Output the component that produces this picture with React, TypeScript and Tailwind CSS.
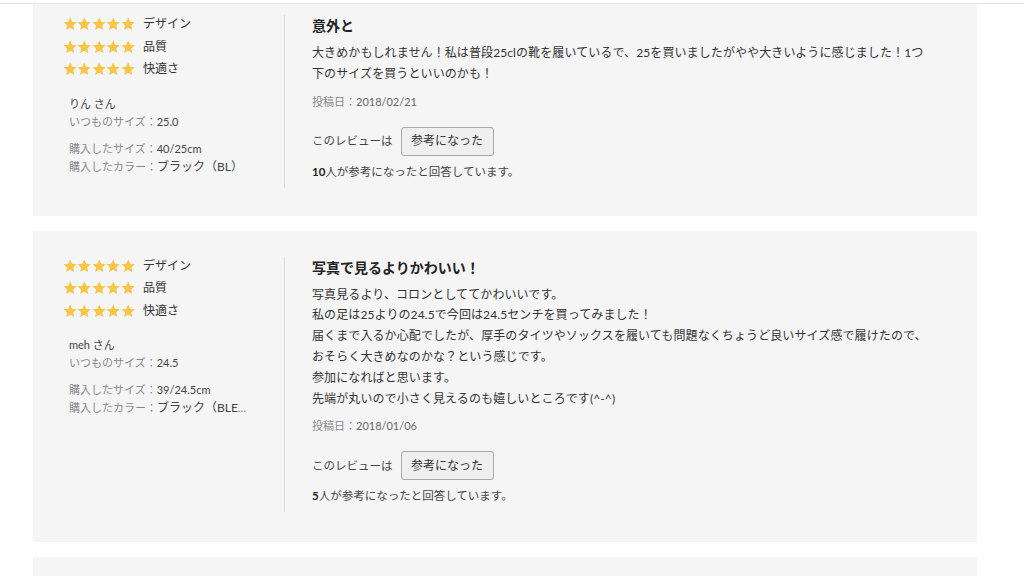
import React from 'react';

interface Review {
  name: string;
  usual: string;
  size: string;
  color: string;
  title: string;
  lines: string[];
  date: string;
  helpful: number;
}

const REVIEWS: Review[] = [
  {
    name: 'りん さん',
    usual: '25.0',
    size: '40/25cm',
    color: 'ブラック（BL）',
    title: '意外と',
    lines: [
      '大きめかもしれません！私は普段25clの靴を履いているで、25を買いましたがやや大きいように感じました！1つ',
      '下のサイズを買うといいのかも！',
    ],
    date: '2018/02/21',
    helpful: 10,
  },
  {
    name: 'meh さん',
    usual: '24.5',
    size: '39/24.5cm',
    color: 'ブラック（BLEACK）',
    title: '写真で見るよりかわいい！',
    lines: [
      '写真見るより、コロンとしててかわいいです。',
      '私の足は25よりの24.5で今回は24.5センチを買ってみました！',
      '届くまで入るか心配でしたが、厚手のタイツやソックスを履いても問題なくちょうど良いサイズ感で履けたので、',
      'おそらく大きめなのかな？という感じです。',
      '参加になればと思います。',
      '先端が丸いので小さく見えるのも嬉しいところです(^-^)',
    ],
    date: '2018/01/06',
    helpful: 5,
  },
];

const RATINGS = ['デザイン', '品質', '快適さ'];

const Star = () => (
  <svg viewBox="0 0 24 24" className="w-[14.4px] h-[14.4px]" fill="#f7c548">
    <path d="M12 1l3.2 7.1 7.7.8-5.8 5.2 1.7 7.6L12 17.8l-6.8 3.9 1.7-7.6-5.8-5.2 7.7-.8z" />
  </svg>
);

const ReviewCard: React.FC<{ review: Review; first?: boolean }> = ({ review, first }) => (
  <div className={`w-[944px] ml-[33px] bg-[#f5f5f5] flex pl-[30px] pr-[20px] ${first ? 'pt-[11px] pb-[28px]' : 'pt-[26px] pb-[30px]'}`}>
    {/* left: stars + reviewer */}
    <div className="w-[221px] shrink-0 pr-[34px] -mt-[2px]">
      {RATINGS.map(label => (
        <div key={label} className="h-[22.5px] flex items-center">
          <div className="flex">
            {[0, 1, 2, 3, 4].map(i => <Star key={i} />)}
          </div>
          <span className="ml-[8px] text-[12px] text-[#333]">{label}</span>
        </div>
      ))}
      <div className="mt-[14px] pl-[6px] text-[11px] leading-[18px]">
        <p className="text-[#444]">{review.name}</p>
        <p className="text-[#888]">いつものサイズ：<span className="text-[#444]">{review.usual}</span></p>
        <p className="mt-[9px] text-[#888]">購入したサイズ：<span className="text-[#444]">{review.size}</span></p>
        <p className="text-[#888] truncate">購入したカラー：<span className="text-[#444] text-[12px]">{review.color}</span></p>
      </div>
    </div>

    {/* right: review body */}
    <div className="flex-1 border-l border-[#dcdcdc] pl-[27px] pb-[7px]">
      <h3 className="text-[14px] leading-[22px] font-bold text-[#222]">{review.title}</h3>
      <p className="mt-[6px] text-[12px] leading-[20.8px] tracking-[0.1px] text-[#333] whitespace-nowrap">
        {review.lines.map((l, i) => (
          <React.Fragment key={i}>
            {l}
            {i < review.lines.length - 1 && <br />}
          </React.Fragment>
        ))}
      </p>
      <p className="mt-[8px] text-[11px] leading-[18px] text-[#888]">
        投稿日：<span className="text-[#666]">{review.date}</span>
      </p>
      <div className="mt-[16px] flex items-center">
        <span className="text-[11.5px] text-[#444]">このレビューは</span>
        <button className="ml-[8px] w-[93px] h-[29px] bg-[#efefef] border border-[#a9a9a9] rounded-[3px] text-[12px] text-[#333]">
          参考になった
        </button>
      </div>
      <p className="mt-[7px] text-[11.5px] leading-[18px] text-[#444]">
        <span className="font-bold text-[#222]">{review.helpful}</span>人が参考になったと回答しています。
      </p>
    </div>
  </div>
);

export default function App() {
  return (
    <div className="w-[1024px] h-[576px] overflow-hidden bg-white font-['Lato','Noto_Sans_CJK_JP',sans-serif]">
      <div className="h-[4px] bg-white border-b border-[#e6e6e6]" />
      <div className="flex flex-col gap-[15px]">
        <ReviewCard review={REVIEWS[0]} first />
        <ReviewCard review={REVIEWS[1]} />
        <div className="w-[944px] ml-[33px] h-[40px] bg-[#f5f5f5]" />
      </div>
    </div>
  );
}
